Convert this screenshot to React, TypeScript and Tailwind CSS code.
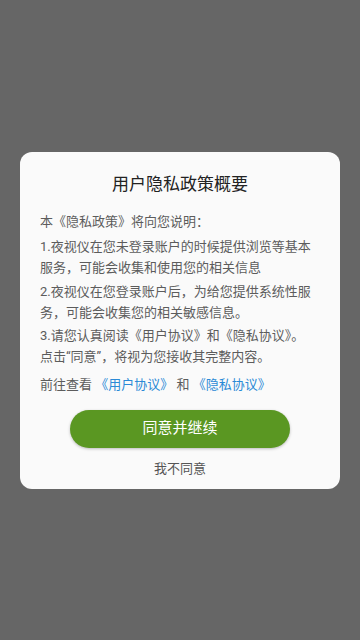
import React from 'react';

const font = { fontFamily: '"Roboto", "Noto Sans CJK SC", sans-serif' };

export default function App() {
  return (
    <div className="w-[360px] h-[640px] bg-[#666666] flex items-center justify-center" style={font}>
      <div className="w-[320px] bg-[#fafafa] rounded-[12px] px-5 pt-5 pb-[8px]">
        <h2 className="text-center text-[17px] leading-[24px] text-[#222222]">用户隐私政策概要</h2>

        <div className="mt-[15px] text-[13px] leading-[21px] text-[#5c5c5c]">
          <p>本《隐私政策》将向您说明：</p>
          <p className="mt-[4px]">1.夜视仪在您未登录账户的时候提供浏览等基本服务，可能会收集和使用您的相关信息</p>
          <p className="mt-[3px]">2.夜视仪在您登录账户后，为给您提供系统性服务，可能会收集您的相关敏感信息。</p>
          <p className="mt-[2px]">
            3.请您认真阅读《用户协议》和《隐私协议》。
            <br />
            点击“同意”，将视为您接收其完整内容。
          </p>
          <p className="mt-[7px]">
            前往查看 <span className="text-[#2b8ad6]">《用户协议》</span> 和 <span className="text-[#2b8ad6]">《隐私协议》</span>
          </p>
        </div>

        <button className="mt-[15px] mx-auto block w-[220px] h-[38px] rounded-full bg-[#5a9722] text-white text-[15px] shadow-[0_1px_3px_rgba(0,0,0,0.25)]">
          同意并继续
        </button>
        <button className="mt-[9px] mx-auto block h-[24px] text-[13px] text-[#555555]">我不同意</button>
      </div>
    </div>
  );
}
